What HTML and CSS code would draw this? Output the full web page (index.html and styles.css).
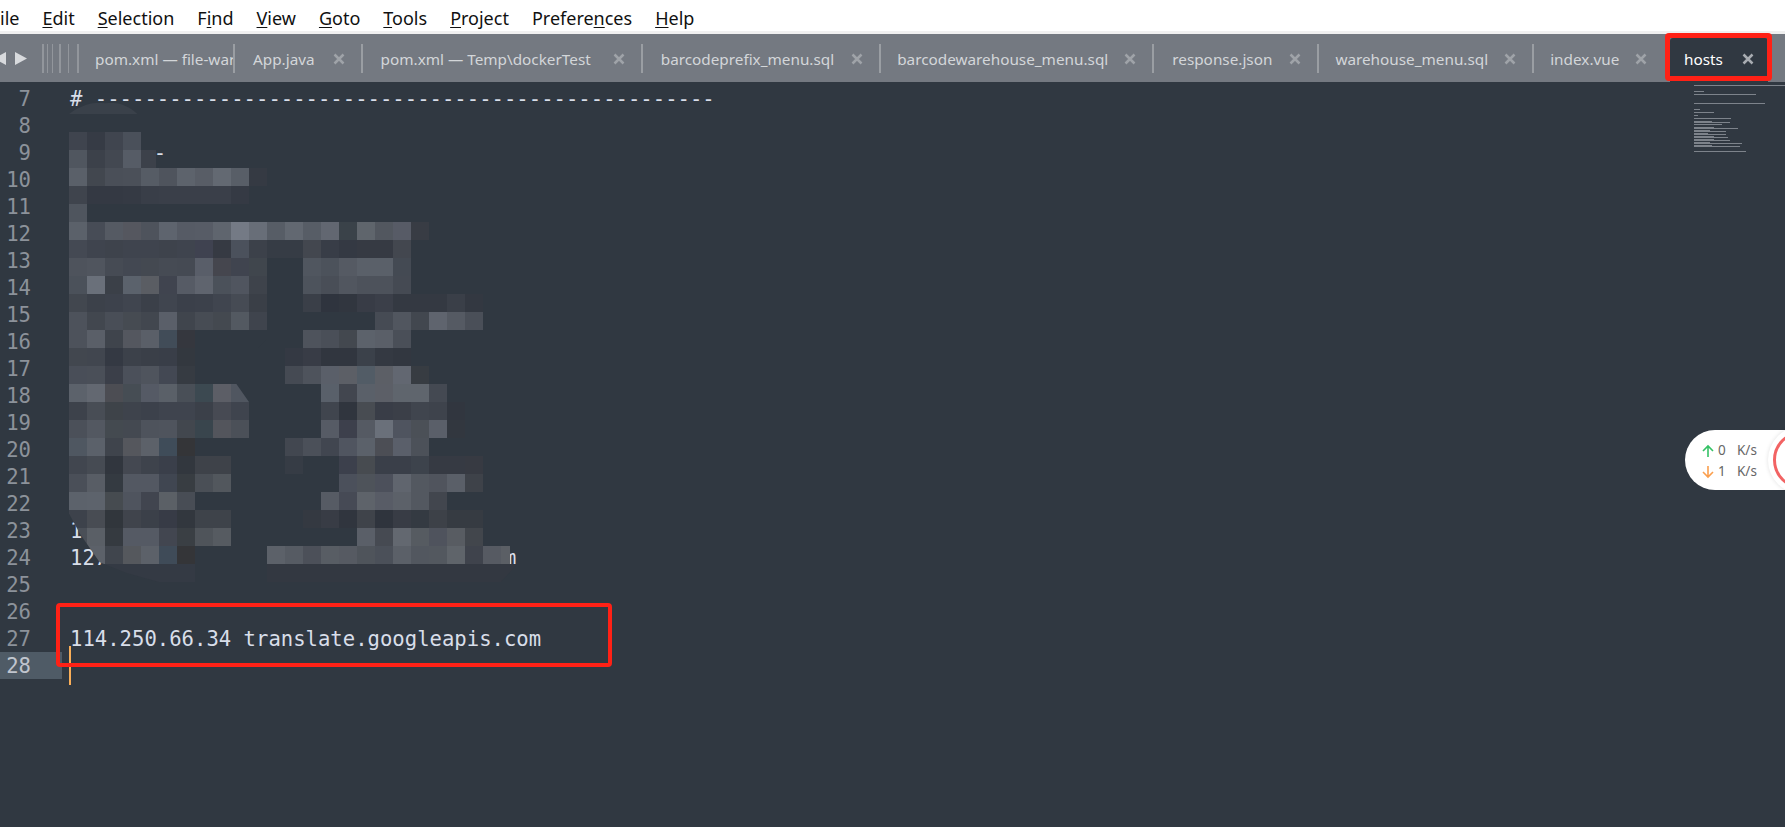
FILE: index.html
```html
<!DOCTYPE html>
<html lang="en">
<head>
<meta charset="utf-8">
<title>hosts</title>
<link rel="stylesheet" href="styles.css">
</head>
<body>
<svg class="defs" width="0" height="0"><symbol id="x" viewBox="0 0 12 12"><path d="M1.5 1.5l9 9M10.5 1.5l-9 9"/></symbol></svg>
<nav class="menu">
  <span class="m-file">ile</span><span><u>E</u>dit</span><span><u>S</u>election</span><span>F<u>i</u>nd</span><span><u>V</u>iew</span><span><u>G</u>oto</span><span><u>T</u>ools</span><span><u>P</u>roject</span><span>Prefere<u>n</u>ces</span><span><u>H</u>elp</span>
</nav>
<div class="tabbar">
  <svg class="tabnav" width="79" height="48" viewBox="0 0 79 48">
    <path class="tri" d="M6 18v13L-6 24.500zM15 18l12 6.500L15 31z"/>
    <path class="stack" d="M42 10h2v29h-2zM47 10h1v29h-1zM52 10h1v29h-1zM59 10h2v29h-2zM68 10h1v29h-1zM77 10h2v29h-2z"/>
  </svg>
  <div class="tab tab-first"><span class="tab-clip">pom.xml — file-warehouse</span></div><i class="sep"></i>
  <div class="tab"><span>App.java</span><svg class="close"><use href="#x"/></svg></div><i class="sep"></i>
  <div class="tab tab-wide"><span>pom.xml — Temp\dockerTest</span><svg class="close"><use href="#x"/></svg></div><i class="sep"></i>
  <div class="tab tab-near"><span>barcodeprefix_menu.sql</span><svg class="close"><use href="#x"/></svg></div><i class="sep"></i>
  <div class="tab tab-tight"><span>barcodewarehouse_menu.sql</span><svg class="close"><use href="#x"/></svg></div><i class="sep"></i>
  <div class="tab tab-near"><span>response.json</span><svg class="close"><use href="#x"/></svg></div><i class="sep"></i>
  <div class="tab tab-tight"><span>warehouse_menu.sql</span><svg class="close"><use href="#x"/></svg></div><i class="sep"></i>
  <div class="tab tab-index"><span>index.vue</span><svg class="close"><use href="#x"/></svg></div>
  <div class="tab tab-active"><span>hosts</span><svg class="close"><use href="#x"/></svg></div>
</div>
<main class="editor">
  <div class="gutter">
    <div>7</div><div>8</div><div>9</div><div>10</div><div>11</div><div>12</div><div>13</div><div>14</div><div>15</div><div>16</div><div>17</div><div>18</div><div>19</div><div>20</div><div>21</div><div>22</div><div>23</div><div>24</div><div>25</div><div>26</div><div>27</div><div class="current">28</div>
  </div>
  <pre class="code"># --------------------------------------------------

       <span class="nudge">-</span>













1
127.0.0.1                          m


114.250.66.34 translate.googleapis.com
<span class="caret"></span></pre>

  <svg class="mosaic" width="450" height="486" viewBox="0 0 25 27" shape-rendering="crispEdges">
    <defs><clipPath id="mclip"><polygon points="0,0 25,0 25,25.9 24,27 5,27 3.2,26.5 1.700,25.9 .6,24.300 0,23.200"/></clipPath></defs>
    <g clip-path="url(#mclip)">
      <path fill="#3a414a" d="M0 1C1 .3 1.500 .4 2 .4S3 .3 3.800 1z" shape-rendering="auto"/>
      <g>
        <rect x="0" y="2" fill="#3f444e"/><rect x="1" y="2" fill="#363b45"/><rect x="2" y="2" fill="#40454f"/><rect x="3" y="2" fill="#4a505a"/>
        <rect x="0" y="3" fill="#50565f"/><rect x="1" y="3" fill="#3c414a"/><rect x="2" y="3" fill="#434851"/><rect x="3" y="3" fill="#565c66"/><rect x="4" y="3" fill="#3c414a" class="short"/>
        <rect x="0" y="4" fill="#5a6069"/><rect x="1" y="4" fill="#42474f"/><rect x="2" y="4" fill="#4a4f58"/><rect x="3" y="4" fill="#4b5059"/><rect x="4" y="4" fill="#565c65"/><rect x="5" y="4" fill="#4f545d"/><rect x="6" y="4" fill="#5d636c"/><rect x="7" y="4" fill="#585d66"/><rect x="8" y="4" fill="#636972"/><rect x="9" y="4" fill="#585e67"/><rect x="10" y="4" fill="#353a43"/>
        <rect x="0" y="5" fill="#3f444d"/><rect x="1" y="5" fill="#343943"/><rect x="2" y="5" fill="#343943"/><rect x="3" y="5" fill="#353a44"/><rect x="4" y="5" fill="#393e48"/><rect x="5" y="5" fill="#3a3f49"/><rect x="6" y="5" fill="#3a3f49"/><rect x="7" y="5" fill="#3a3f49"/><rect x="8" y="5" fill="#3a3f49"/><rect x="9" y="5" fill="#353a44"/>
        <rect x="0" y="6" fill="#4f555e"/>
        <rect x="0" y="7" fill="#5b616a"/><rect x="1" y="7" fill="#474c56"/><rect x="2" y="7" fill="#555a63"/><rect x="3" y="7" fill="#55575f"/><rect x="4" y="7" fill="#4e535c"/><rect x="5" y="7" fill="#5e646e"/><rect x="6" y="7" fill="#565b65"/><rect x="7" y="7" fill="#575c66"/><rect x="8" y="7" fill="#5f656e"/><rect x="9" y="7" fill="#747a85"/><rect x="10" y="7" fill="#686e78"/><rect x="11" y="7" fill="#575d66"/><rect x="12" y="7" fill="#626871"/><rect x="13" y="7" fill="#575d66"/><rect x="14" y="7" fill="#626771"/><rect x="15" y="7" fill="#3a4249"/><rect x="16" y="7" fill="#5f656c"/><rect x="17" y="7" fill="#52575f"/><rect x="18" y="7" fill="#575b66"/><rect x="19" y="7" fill="#383c44"/>
        <rect x="0" y="8" fill="#444953"/><rect x="1" y="8" fill="#3f444e"/><rect x="2" y="8" fill="#3e434c"/><rect x="3" y="8" fill="#3f444e"/><rect x="4" y="8" fill="#3f444e"/><rect x="5" y="8" fill="#3e434c"/><rect x="6" y="8" fill="#3f444e"/><rect x="7" y="8" fill="#3f4250"/><rect x="8" y="8" fill="#363a43"/><rect x="9" y="8" fill="#4b515c"/><rect x="10" y="8" fill="#3c414a"/><rect x="11" y="8" fill="#363c45"/><rect x="12" y="8" fill="#363c45"/><rect x="13" y="8" fill="#43474f"/><rect x="14" y="8" fill="#383d47"/><rect x="15" y="8" fill="#343943"/><rect x="16" y="8" fill="#363a43"/><rect x="17" y="8" fill="#363a43"/><rect x="18" y="8" fill="#43474f"/>
        <rect x="0" y="9" fill="#4e535c"/><rect x="1" y="9" fill="#50555e"/><rect x="2" y="9" fill="#464b54"/><rect x="3" y="9" fill="#434852"/><rect x="4" y="9" fill="#444951"/><rect x="5" y="9" fill="#464b54"/><rect x="6" y="9" fill="#454a53"/><rect x="7" y="9" fill="#595e69"/><rect x="8" y="9" fill="#45464e"/><rect x="9" y="9" fill="#40444f"/><rect x="10" y="9" fill="#40464d"/><rect x="13" y="9" fill="#50565f"/><rect x="14" y="9" fill="#4c525b"/><rect x="15" y="9" fill="#555a63"/><rect x="16" y="9" fill="#5a6069"/><rect x="17" y="9" fill="#5a6069"/><rect x="18" y="9" fill="#444a53"/>
        <rect x="0" y="10" fill="#4b515a"/><rect x="1" y="10" fill="#6a707a"/><rect x="2" y="10" fill="#3b4048"/><rect x="3" y="10" fill="#5b626c"/><rect x="4" y="10" fill="#5a5d63"/><rect x="5" y="10" fill="#40444f"/><rect x="6" y="10" fill="#565b65"/><rect x="7" y="10" fill="#5f646e"/><rect x="8" y="10" fill="#4b515a"/><rect x="9" y="10" fill="#50555f"/><rect x="10" y="10" fill="#3e434b"/><rect x="13" y="10" fill="#4d535c"/><rect x="14" y="10" fill="#494e57"/><rect x="15" y="10" fill="#51565f"/><rect x="16" y="10" fill="#4d525b"/><rect x="17" y="10" fill="#4d525b"/><rect x="18" y="10" fill="#454a53"/>
        <rect x="0" y="11" fill="#42474f"/><rect x="1" y="11" fill="#3c414a"/><rect x="2" y="11" fill="#3d424c"/><rect x="3" y="11" fill="#40454f"/><rect x="4" y="11" fill="#3b4049"/><rect x="5" y="11" fill="#40454f"/><rect x="6" y="11" fill="#3b404a"/><rect x="7" y="11" fill="#3c414b"/><rect x="8" y="11" fill="#40454f"/><rect x="9" y="11" fill="#464b54"/><rect x="10" y="11" fill="#3a3f47"/><rect x="13" y="11" fill="#3a3f48"/><rect x="14" y="11" fill="#2f343e"/><rect x="15" y="11" fill="#31363f"/><rect x="16" y="11" fill="#383c46"/><rect x="17" y="11" fill="#3b3f49"/><rect x="18" y="11" fill="#343942"/><rect x="19" y="11" fill="#343942"/><rect x="20" y="11" fill="#343942"/><rect x="21" y="11" fill="#3a3f48"/><rect x="22" y="11" fill="#333841"/>
        <rect x="0" y="12" fill="#4d525b"/><rect x="1" y="12" fill="#42474f"/><rect x="2" y="12" fill="#494e57"/><rect x="3" y="12" fill="#464b52"/><rect x="4" y="12" fill="#42474f"/><rect x="5" y="12" fill="#5a5f69"/><rect x="6" y="12" fill="#40454d"/><rect x="7" y="12" fill="#474c54"/><rect x="8" y="12" fill="#444950"/><rect x="9" y="12" fill="#535961"/><rect x="10" y="12" fill="#3f444d"/><rect x="17" y="12" fill="#464b54"/><rect x="18" y="12" fill="#51565f"/><rect x="19" y="12" fill="#42474f"/><rect x="20" y="12" fill="#5f646e"/><rect x="21" y="12" fill="#555a63"/><rect x="22" y="12" fill="#4a4f58"/>
        <rect x="0" y="13" fill="#4d525b"/><rect x="1" y="13" fill="#5a5f68"/><rect x="2" y="13" fill="#3f444c"/><rect x="3" y="13" fill="#54575f"/><rect x="4" y="13" fill="#5a5f68"/><rect x="5" y="13" fill="#414c58"/><rect x="6" y="13" fill="#35373e"/><rect x="13" y="13" fill="#4e535c"/><rect x="14" y="13" fill="#4a4f58"/><rect x="15" y="13" fill="#43484f"/><rect x="16" y="13" fill="#5c626b"/><rect x="17" y="13" fill="#5a5f68"/><rect x="18" y="13" fill="#4a4f58"/>
        <rect x="0" y="14" fill="#42474f"/><rect x="1" y="14" fill="#41464f"/><rect x="2" y="14" fill="#343943"/><rect x="3" y="14" fill="#3c414a"/><rect x="4" y="14" fill="#3a3f48"/><rect x="5" y="14" fill="#393e48"/><rect x="6" y="14" fill="#33383f"/><rect x="12" y="14" fill="#343943"/><rect x="13" y="14" fill="#383c46"/><rect x="14" y="14" fill="#31363f"/><rect x="15" y="14" fill="#31363f"/><rect x="16" y="14" fill="#3b414a"/><rect x="17" y="14" fill="#343942"/><rect x="18" y="14" fill="#323740"/>
        <rect x="0" y="15" fill="#494e58"/><rect x="1" y="15" fill="#4a4f58"/><rect x="2" y="15" fill="#3b3f49"/><rect x="3" y="15" fill="#4b505a"/><rect x="4" y="15" fill="#4f545d"/><rect x="5" y="15" fill="#434853"/><rect x="6" y="15" fill="#363b42"/><rect x="12" y="15" fill="#454a53"/><rect x="13" y="15" fill="#4e535c"/><rect x="14" y="15" fill="#5a5f69"/><rect x="15" y="15" fill="#5c5f66"/><rect x="16" y="15" fill="#525c66"/><rect x="17" y="15" fill="#5c5f66"/><rect x="18" y="15" fill="#626771"/><rect x="19" y="15" fill="#373c42"/>
        <rect x="0" y="16" fill="#5c626b"/><rect x="1" y="16" fill="#636871"/><rect x="2" y="16" fill="#4c4d53"/><rect x="3" y="16" fill="#464d54"/><rect x="4" y="16" fill="#555a65"/><rect x="5" y="16" fill="#5a6068"/><rect x="6" y="16" fill="#494f57"/><rect x="7" y="16" fill="#3c4951"/><rect x="8" y="16" fill="#5c5e66"/><rect x="9" y="16" fill="#505660"/><rect x="14" y="16" fill="#59606a"/><rect x="15" y="16" fill="#42464f"/><rect x="16" y="16" fill="#5a6069"/><rect x="17" y="16" fill="#5c5f67"/><rect x="18" y="16" fill="#5f656d"/><rect x="19" y="16" fill="#5f656d"/><rect x="20" y="16" fill="#444952"/>
        <rect x="0" y="17" fill="#3d424b"/><rect x="1" y="17" fill="#484d55"/><rect x="2" y="17" fill="#3e4349"/><rect x="3" y="17" fill="#3e434c"/><rect x="4" y="17" fill="#3c414b"/><rect x="5" y="17" fill="#3f444e"/><rect x="6" y="17" fill="#3f444e"/><rect x="7" y="17" fill="#3b4049"/><rect x="8" y="17" fill="#474a53"/><rect x="9" y="17" fill="#3f444e"/><rect x="14" y="17" fill="#40454e"/><rect x="15" y="17" fill="#30353e"/><rect x="16" y="17" fill="#484c52"/><rect x="17" y="17" fill="#393d47"/><rect x="18" y="17" fill="#3b3f48"/><rect x="19" y="17" fill="#40454e"/><rect x="20" y="17" fill="#3e434c"/><rect x="21" y="17" fill="#31363f"/>
        <rect x="0" y="18" fill="#4b5059"/><rect x="1" y="18" fill="#535861"/><rect x="2" y="18" fill="#444a50"/><rect x="3" y="18" fill="#444951"/><rect x="4" y="18" fill="#4e535c"/><rect x="5" y="18" fill="#4f545d"/><rect x="6" y="18" fill="#42474e"/><rect x="7" y="18" fill="#39454d"/><rect x="8" y="18" fill="#53555c"/><rect x="9" y="18" fill="#4b5058"/><rect x="14" y="18" fill="#565b65"/><rect x="15" y="18" fill="#3d404c"/><rect x="16" y="18" fill="#555a63"/><rect x="17" y="18" fill="#6a707a"/><rect x="18" y="18" fill="#4f545f"/><rect x="19" y="18" fill="#4b5057"/><rect x="20" y="18" fill="#5a5f69"/><rect x="21" y="18" fill="#32373f"/>
        <rect x="0" y="19" fill="#4f5761"/><rect x="1" y="19" fill="#5b616a"/><rect x="2" y="19" fill="#3f444c"/><rect x="3" y="19" fill="#55575d"/><rect x="4" y="19" fill="#5c6169"/><rect x="5" y="19" fill="#3f4c59"/><rect x="6" y="19" fill="#343538"/><rect x="12" y="19" fill="#424750"/><rect x="13" y="19" fill="#4b5059"/><rect x="14" y="19" fill="#414650"/><rect x="15" y="19" fill="#505560"/><rect x="16" y="19" fill="#5b616a"/><rect x="17" y="19" fill="#4c4e55"/><rect x="18" y="19" fill="#5a5f6a"/><rect x="19" y="19" fill="#4c5159"/>
        <rect x="0" y="20" fill="#41464f"/><rect x="1" y="20" fill="#464b53"/><rect x="2" y="20" fill="#31363e"/><rect x="3" y="20" fill="#444851"/><rect x="4" y="20" fill="#3e434c"/><rect x="5" y="20" fill="#3a3f4a"/><rect x="6" y="20" fill="#32373e"/><rect x="7" y="20" fill="#3e4249"/><rect x="8" y="20" fill="#3e4249"/><rect x="12" y="20" fill="#363c45"/><rect x="15" y="20" fill="#3c404c"/><rect x="16" y="20" fill="#474b50"/><rect x="17" y="20" fill="#3a3f49"/><rect x="18" y="20" fill="#3a3f49"/><rect x="19" y="20" fill="#3d434c"/><rect x="20" y="20" fill="#363a43"/><rect x="21" y="20" fill="#363a43"/><rect x="22" y="20" fill="#373a42"/>
        <rect x="0" y="21" fill="#4a4f58"/><rect x="1" y="21" fill="#585d65"/><rect x="2" y="21" fill="#343a41"/><rect x="3" y="21" fill="#535862"/><rect x="4" y="21" fill="#535862"/><rect x="5" y="21" fill="#404651"/><rect x="6" y="21" fill="#383d42"/><rect x="7" y="21" fill="#4a4f56"/><rect x="8" y="21" fill="#52575d"/><rect x="15" y="21" fill="#4b505b"/><rect x="16" y="21" fill="#4e535a"/><rect x="17" y="21" fill="#4c505b"/><rect x="18" y="21" fill="#60656e"/><rect x="19" y="21" fill="#535860"/><rect x="20" y="21" fill="#50545d"/><rect x="21" y="21" fill="#5a5f68"/><rect x="22" y="21" fill="#3e4249"/>
        <rect x="0" y="22" fill="#5c626b"/><rect x="1" y="22" fill="#5d636c"/><rect x="2" y="22" fill="#464b50"/><rect x="3" y="22" fill="#4f545e"/><rect x="4" y="22" fill="#41454f"/><rect x="5" y="22" fill="#5b6066"/><rect x="6" y="22" fill="#484d55"/><rect x="14" y="22" fill="#565b64"/><rect x="15" y="22" fill="#464a55"/><rect x="16" y="22" fill="#5e636a"/><rect x="17" y="22" fill="#585c66"/><rect x="18" y="22" fill="#5c6169"/><rect x="19" y="22" fill="#535860"/><rect x="20" y="22" fill="#42464e"/>
        <rect x="0" y="23" fill="#3d424b"/><rect x="1" y="23" fill="#484c53"/><rect x="2" y="23" fill="#31363c"/><rect x="3" y="23" fill="#40444c"/><rect x="4" y="23" fill="#3b4049"/><rect x="5" y="23" fill="#373b46"/><rect x="6" y="23" fill="#32373e"/><rect x="7" y="23" fill="#3e434a"/><rect x="8" y="23" fill="#3e434a"/><rect x="13" y="23" fill="#343941"/><rect x="14" y="23" fill="#383c45"/><rect x="15" y="23" fill="#30353e"/><rect x="16" y="23" fill="#3f434a"/><rect x="17" y="23" fill="#2f343d"/><rect x="18" y="23" fill="#383c45"/><rect x="19" y="23" fill="#343a42"/><rect x="20" y="23" fill="#3d4148"/><rect x="21" y="23" fill="#363b42"/><rect x="22" y="23" fill="#363b42"/>
        <rect x="0" y="24" fill="#4a4f57"/><rect x="1" y="24" fill="#5a5f66"/><rect x="2" y="24" fill="#353a40"/><rect x="3" y="24" fill="#555a64"/><rect x="4" y="24" fill="#555a64"/><rect x="5" y="24" fill="#424650"/><rect x="6" y="24" fill="#3a3f44"/><rect x="7" y="24" fill="#4f545a"/><rect x="8" y="24" fill="#565b61"/><rect x="16" y="24" fill="#5a5f68"/><rect x="17" y="24" fill="#464a52"/><rect x="18" y="24" fill="#636870"/><rect x="19" y="24" fill="#565b61"/><rect x="20" y="24" fill="#4f535d"/><rect x="21" y="24" fill="#585c62"/><rect x="22" y="24" fill="#42464c"/>
        <rect x="0" y="25" fill="#4b5058"/><rect x="1" y="25" fill="#5c6169"/><rect x="2" y="25" fill="#40454d"/><rect x="3" y="25" fill="#55585d"/><rect x="4" y="25" fill="#5c6169"/><rect x="5" y="25" fill="#3f4b58"/><rect x="6" y="25" fill="#343538"/><rect x="7" y="25" fill="#303841" class="wide4"/><rect x="11" y="25" fill="#5c6169"/><rect x="12" y="25" fill="#565b63"/><rect x="13" y="25" fill="#4c5059"/><rect x="14" y="25" fill="#585d64"/><rect x="15" y="25" fill="#565a62"/><rect x="16" y="25" fill="#4f545b"/><rect x="17" y="25" fill="#4b5059"/><rect x="18" y="25" fill="#5b6068"/><rect x="19" y="25" fill="#52575f"/><rect x="20" y="25" fill="#53585f"/><rect x="21" y="25" fill="#5f646a"/><rect x="22" y="25" fill="#3f434c"/><rect x="23" y="25" fill="#565a62"/><rect x="24" y="25" fill="#5b5f65" class="half"/>
        <rect x="0" y="26" fill="#343a44" class="wide6"/><rect x="11" y="26" fill="#333841" class="wide14"/>
      </g>
    </g>
    <path class="cut" d="M9.300 16H10V17zM10.500 14H11V13.500z" shape-rendering="auto"/>
  </svg>

  <svg class="minimap" width="95" height="70" viewBox="0 0 95 70" shape-rendering="crispEdges">
    <path d="M0 0h91v1H0zM0 6h10v1H0zM0 9h62v1H0zM0 18h71v1H0zM0 24h6v1H0zM0 27h20v1H0zM0 30h4v1H0zM0 33h37v1H0zM0 36h18v1h18v1H0zM0 39h28v1H0zM0 42h20v1h24v1H0zM0 45h16v1h16v1H0zM0 48h14v1h18v1H0zM0 51h20v1h14v1H0zM0 54h20v1h16v1H0zM0 57h16v1h32v1H0zM0 60h18v1h28v1H0zM0 66h52v1H0z"/>
  </svg>

  <div class="netspeed">
    <div class="net-rows">
      <div class="net-row"><svg class="arrow up" width="14" height="14" viewBox="0 0 14 14"><path d="M7 13V2M2 7l5-5 5 5"/></svg><span class="net-val">0</span><span>K/s</span></div>
      <div class="net-row"><svg class="arrow down" width="14" height="14" viewBox="0 0 14 14"><path d="M7 1v11M2 7l5 5 5-5"/></svg><span class="net-val">1</span><span>K/s</span></div>
    </div>
    <div class="net-ball"><i class="net-ring"></i></div>
  </div>

  <div class="mark mark-code"></div>
</main>
<div class="mark mark-tab"></div>
</body>
</html>
```
FILE: styles.css
```css
* { box-sizing: border-box; }
html, body { margin: 0; height: 100%; }
body {
  width: 1785px;
  height: 827px;
  overflow: hidden;
  position: relative;
  display: flex;
  flex-direction: column;
  background: #303841;
  font-family: "Noto Sans", "Open Sans", sans-serif;
}
.defs { position: absolute; }

.menu {
  height: 34px;
  flex: none;
  background: #fff;
  border-bottom: 3px solid #f0f0f0;
  display: flex;
  align-items: center;
  gap: 23px;
  padding: 4px 0 0 0;
  font-size: 18px;
  color: #111;
  white-space: nowrap;
}

.tabbar {
  height: 48px;
  flex: none;
  display: flex;
  align-items: center;
  background: #747981;
  font-size: 15.300px;
  color: #d3d6d9;
  white-space: nowrap;
}
.tabnav { flex: none; }
.tri { fill: #d8dadd; }
.stack { fill: #92969c; }
.sep { flex: none; width: 2px; height: 29px; background: #9a9ea3; }
.tab {
  flex: none;
  height: 100%;
  display: flex;
  align-items: center;
  gap: 18px;
  padding: 2px 16px 0 18px;
}
.tab-wide { gap: 22px; }
.tab-near { gap: 17px; }
.tab-tight { gap: 16px; padding-left: 16px; }
.tab-index { gap: 16px; padding-left: 16px; }
.tab-first { width: 154px; padding: 2px 0 0 16px; overflow: hidden; }
.tab-clip { display: block; width: 138px; overflow: hidden; }
.close { width: 12px; height: 12px; flex: none; fill: none; stroke: #9fa3a8; stroke-width: 2.500; }
.tab-active {
  height: 44px;
  align-self: flex-end;
  margin-left: auto;
  margin-right: 17px;
  width: 98px;
  padding: 0 14px 2px 14px;
  justify-content: space-between;
  gap: 0;
  background: #303841;
  border-radius: 3px 3px 0 0;
  color: #fff;
}
.tab-active .close { stroke: #a8acb1; }

.editor {
  flex: 1;
  position: relative;
  display: flex;
  padding-top: 4px;
  background: #303841;
  font-family: "DejaVu Sans Mono", monospace;
  font-size: 20.600px;
  line-height: 27px;
}
.gutter {
  flex: none;
  width: 62px;
  text-align: right;
  color: #8c929a;
}
.gutter div { padding-right: 31px; }
.gutter .current { height: 26px; background: #4f5b66; box-shadow: 0 -1px 0 #4f5b66; color: #c0c5ce; }
.code {
  margin: 0;
  padding-left: 8px;
  font: inherit;
  color: #d8dee9;
  position: relative;
}
.nudge { margin-left: -3px; }
.caret {
  position: absolute;
  left: 7px;
  top: 560px;
  width: 2px;
  height: 39px;
  background: #f9ae58;
}

.mosaic { position: absolute; left: 69px; top: 14px; }
.mosaic rect { width: 1px; height: 1px; }
.mosaic rect.short { width: .85px; }
.mosaic rect.half { width: .5px; }
.mosaic rect.wide4 { width: 4px; }
.mosaic rect.wide6 { width: 7px; }
.mosaic rect.wide14 { width: 14px; }
.cut { fill: #303841; }

.minimap { position: absolute; left: 1694px; top: 3px; }
.minimap path { fill: #7d838b; }

.netspeed {
  position: absolute;
  left: 1685px;
  top: 348px;
  width: 130px;
  height: 60px;
  display: flex;
  align-items: center;
  padding: 2px 0 0 16px;
  background: #fff;
  border-radius: 30px;
  font-family: "Noto Sans", sans-serif;
  font-size: 13.500px;
  line-height: 21px;
  color: #666;
}
.net-row { display: flex; align-items: center; }
.arrow { fill: none; stroke-width: 1.600; margin-right: 3px; }
.up { stroke: #35c266; }
.down { stroke: #fb9f4e; }
.net-val { width: 19px; }
.net-ball {
  position: absolute;
  left: 83px;
  top: -4px;
  width: 68px;
  height: 68px;
  border-radius: 50%;
  background: #fff;
  box-shadow: 0 0 4px rgba(0, 0, 0, .12);
  display: flex;
  align-items: center;
  justify-content: center;
}
.net-ring {
  width: 58px;
  height: 58px;
  border-radius: 50%;
  border: 3px solid #f26363;
}

.mark { position: absolute; border: 4px solid #ff2116; border-radius: 4px; pointer-events: none; }
.mark-code { left: 56px; top: 521px; width: 556px; height: 64px; }
.mark-tab { left: 1665px; top: 33px; width: 107px; height: 48px; border-width: 5px; }
u { text-underline-offset: 2px; }
```
